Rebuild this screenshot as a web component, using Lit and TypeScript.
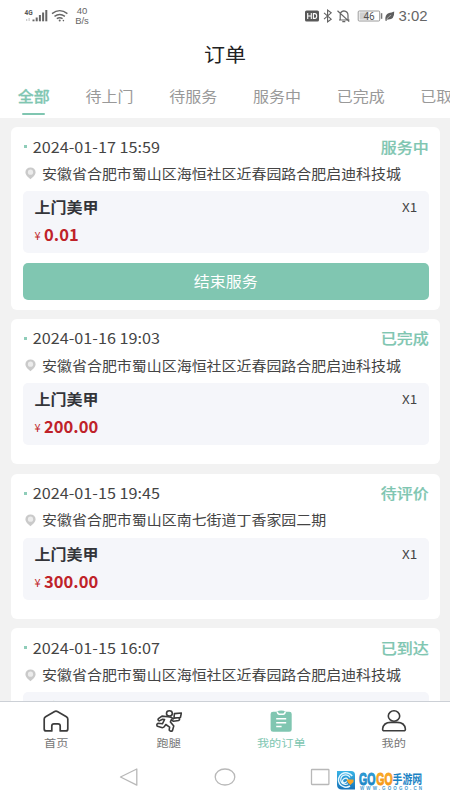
import { LitElement, html, css, svg, nothing } from "lit";
import { customElement, property, state } from "lit/decorators.js";
import { classMap } from "lit/directives/class-map.js";

interface Order {
  time: string;
  status: string;
  address: string;
  service: string;
  count: number;
  price: string;
  action?: string;
}

const LONG_ADDRESS = "安徽省合肥市蜀山区海恒社区近春园路合肥启迪科技城";

const ORDERS: Order[] = [
  { time: "2024-01-17 15:59", status: "服务中", address: LONG_ADDRESS, service: "上门美甲", count: 1, price: "0.01", action: "结束服务" },
  { time: "2024-01-16 19:03", status: "已完成", address: LONG_ADDRESS, service: "上门美甲", count: 1, price: "200.00" },
  { time: "2024-01-15 19:45", status: "待评价", address: "安徽省合肥市蜀山区南七街道丁香家园二期", service: "上门美甲", count: 1, price: "300.00" },
  { time: "2024-01-15 16:07", status: "已到达", address: LONG_ADDRESS, service: "上门美甲", count: 1, price: "300.00" },
];

const TABS = ["全部", "待上门", "待服务", "服务中", "已完成", "已取消"];

@customElement("status-bar")
class StatusBar extends LitElement {
  static styles = css`
    :host { display: flex; justify-content: space-between; align-items: flex-start; height: 35px; padding: 0 22px 0 24px; color: #666; font-family: Roboto, "Noto Sans", sans-serif; box-sizing: border-box; }
    .side { display: flex; align-items: center; height: 32px; }
    svg { display: block; }
    .rate { font: 9.5px/10px "Liberation Sans", sans-serif; text-align: center; margin-left: 5.5px; width: 17px; white-space: nowrap; }
    .clock { font: 14px/16px "Liberation Sans", sans-serif; width: 30px; white-space: nowrap; }
  `;
  render() {
    return html`
      <div class="side">
        <svg width="44" height="16" viewBox="0 0 44 16">
          <text x="0.5" y="6.5" font-size="6.5" font-weight="700" fill="#555">4G</text>
          <g fill="#ccc"><rect x="2" y="11" width="1.3" height="2"/><rect x="4.5" y="10" width="1.3" height="3"/></g>
          <g fill="#666"><rect x="8.5" y="11.5" width="2" height="1.8"/><rect x="11.7" y="9.5" width="2" height="3.8"/><rect x="14.9" y="7" width="2" height="6.3"/><rect x="18.1" y="4.5" width="2" height="8.8"/><rect x="21.3" y="2" width="2" height="11.3"/></g>
          <g fill="none" stroke="#666" stroke-width="1.4"><path d="M28 5.6Q35.7-.4 43.4 5.6"/><path d="M30.5 8.4q5.2-3.8 10.4 0"/><path d="M32.8 10.6q2.9-1.8 5.8 0"/></g>
          <circle cx="35.7" cy="12.4" r="1" fill="#666"/><circle cx="39.4" cy="12.6" r=".8" fill="#666"/>
        </svg>
        <div class="rate">40<br />B/s</div>
      </div>
      <div class="side">
        <svg width="93" height="16" viewBox="0 0 93 16">
          <rect x="0" y="2.5" width="14" height="11" rx="1.6" fill="#595959"/>
          <path d="M2.7 5v6M6.3 5v6M2.7 8h3.6M8.4 5.6v4.8h1.5q1.8 0 1.8-2.4t-1.8-2.4z" fill="none" stroke="#fff" stroke-width="1.1"/>
          <path d="M19 4.8l7.2 6.4-3.6 2.8V2l3.6 2.8L19 11.2" fill="none" stroke="#5f5f5f" stroke-width="1.1"/>
          <path d="M34 12h10.5M35.2 12V7.2q0-3.8 3.6-4.4 4.2.5 4.2 4.4V12M37.3 13.7h3M32.5 2.8l11.7 10.8" fill="none" stroke="#666" stroke-width="1.2"/>
          <rect x="53.2" y="3" width="21.5" height="10" rx="1" fill="#fff" stroke="#9a9a9a" stroke-width="1"/>
          <rect x="54.5" y="4.3" width="9" height="7.4" fill="#d0d0d0"/>
          <rect x="75.8" y="5.2" width="1.5" height="5.6" fill="#777"/>
          <text x="64" y="11.6" text-anchor="middle" font-size="10" fill="#555">46</text>
          <path d="M80.5 12.7q-1-6 3.5-7.7 2.6-.5 5.2-1.5 .4 8.7-6.9 8l-1 1.4z" fill="#5e5e5e"/>
          <path d="M81.5 11.5q2-3 4.6-4.3" fill="none" stroke="#ddd" stroke-width=".6"/>
        </svg>
        <div class="clock"><svg width="30" height="16" viewBox="0 0 30 16"><text x="0.5" y="13" font-size="14.5" textLength="29" lengthAdjust="spacingAndGlyphs" fill="#666">3:02</text></svg></div>
      </div>
    `;
  }
}

@customElement("order-card")
class OrderCard extends LitElement {
  @property({ attribute: false }) order!: Order;

  static styles = css`
    :host { display: block; height: 145.3px; box-sizing: border-box; padding: 9.5px 11.3px 0; border-radius: 6px; background: #fff; flex: none; }
    :host([tall]) { height: 182.5px; }
    .head { display: flex; align-items: center; height: 20px; }
    .dot { width: 3px; height: 3px; background: #8fcdb9; margin: 0 5.5px 0 1.7px; }
    .flat { display: block; transform: scaleY(0.91); white-space: nowrap; }
    .time { font-size: 16.2px; line-height: 20px; color: #444; flex: 1; }
    .status { font-size: 16px; line-height: 20px; font-weight: 500; color: #80c6b1; -webkit-text-stroke: 0.2px #80c6b1; }
    .place { display: flex; align-items: center; height: 24px; margin-top: 5.3px; }
    .pin { display: block; width: 11px; height: 13px; margin: 0 6px 0 2.5px; }
    .address { font-size: 14.96px; line-height: 24px; color: #444; }
    .item { height: 62.5px; margin-top: 5.2px; border-radius: 5px; background: #f5f6fa; padding: 4px 11.5px 0 12px; box-sizing: border-box; }
    .row { display: flex; justify-content: space-between; height: 24px; align-items: center; }
    .name { font-size: 16px; line-height: 24px; font-weight: 700; color: #333439; }
    .count { font-size: 13.5px; line-height: 24px; color: #444; }
    .price { display: flex; height: 24px; margin-top: 3px; color: #bf2229; align-items: center; }
    .yen { display: block; width: 7px; height: 7px; margin: 3px 2.5px 0 0; font-size: 11px; line-height: 7px; white-space: nowrap; }
    .amount { font-size: 16.5px; line-height: 24px; font-weight: 700; transform: scaleY(0.98); }
    .action { display: block; width: 100%; height: 37px; margin-top: 9.5px; padding: 0; border: 0; border-radius: 5px; background: #80c6b1; color: #fff; font: 16px/37px "Noto Sans CJK SC", sans-serif; }
  `;

  render() {
    const o = this.order;
    return html`
      <div class="head">
        <span class="dot"></span>
        <span class="flat time">${o.time}</span>
        <span class="flat status">${o.status}</span>
      </div>
      <div class="place">
        <svg class="pin" viewBox="0 0 11 13"><path d="M5.5.4A5 5 0 0 0 .4 5.3c0 3 3.1 5 5.1 7 2-2 5.1-4 5.1-7A5 5 0 0 0 5.5.4z" fill="#cacaca"/><circle cx="5.5" cy="5.2" r="2.6" fill="#ececec"/></svg>
        <span class="flat address">${o.address}</span>
      </div>
      <div class="item">
        <div class="row"><span class="flat name">${o.service}</span><span class="flat count">X${o.count}</span></div>
        <div class="price"><span class="yen">¥</span><span class="flat amount">${o.price}</span></div>
      </div>
      ${o.action ? html`<button class="action"><span class="flat">${o.action}</span></button>` : nothing}
    `;
  }
}

const NAV = [
  {
    label: "首页",
    icon: svg`<path d="M1.2 9.1q0-1.6 1.4-2.4l8.6-5q1.8-1 3.6 0l8.6 5q1.4.8 1.4 2.4v9.8q0 2-2 2h-5.6v-4.8q0-2.3-2.2-2.3h-4q-2.2 0-2.2 2.3v4.8H3.2q-2 0-2-2z" fill="none" stroke="#3c3c3c" stroke-width="1.7" stroke-linejoin="round"/>`,
  },
  {
    label: "跑腿",
    icon: svg`<g fill="none" stroke="#3c3c3c" stroke-width="1.6" stroke-linejoin="round" stroke-linecap="round"><ellipse cx="13.4" cy="3.4" rx="2.9" ry="2.6"/><path d="M18.4 3.6l7-.6-1 4.5-6.4.6z"/><path d="M12 6.8L6 6.1 2.4 8.6q-1 1.7.9 2.3l3.3-1.6 2 .2-2.2 4.3-4.2-.5q-2.2 1-.8 3l5 1.4q1.6 0 2.6-2l.8-1.2 3.8 2.6-.4 3q1.2 1.8 3.2.6l1.4-4.8-3.4-4 1-2.2 2 1.6 5.4-.8q1.2-1 .4-2M12 6.8l2.8.4 2.6 1.6"/></g>`,
  },
  {
    label: "我的订单",
    icon: svg`<path d="M5.1 1.7h4Q10.3.5 13.2.5t4.1 1.2h4q2.4 0 2.4 2.2v15.5q0 2.3-2.4 2.3H5.1q-2.5 0-2.5-2.3V3.9q0-2.2 2.5-2.2z" fill="#80c6b1"/><path d="M9.3 1.9q.4 2.4 2 2.4h3.9q1.6 0 2-2.4M8.2 8.8h10M8.2 12.7h10M8.2 16.6h5.4" fill="none" stroke="#fff" stroke-width="1.5"/>`,
  },
  {
    label: "我的",
    icon: svg`<g fill="none" stroke="#3c3c3c" stroke-width="1.6"><ellipse cx="13" cy="6" rx="5.7" ry="5.2"/><path d="M1.6 19q.8-6.6 8.3-6.6h6.2q7.5 0 8.3 6.6.1 1.8-1.8 1.8H3.4q-1.9 0-1.8-1.8z"/></g>`,
  },
];

@customElement("bottom-nav")
class BottomNav extends LitElement {
  @property({ type: Number }) active = 2;

  static styles = css`
    :host { display: flex; height: 53px; border-top: 1px solid #ccd0d6; background: #fff; box-sizing: border-box; flex: none; }
    .entry { flex: 1; display: flex; flex-direction: column; align-items: center; padding-top: 8px; color: #777; }
    .icon { display: block; width: 26px; height: 22px; }
    .label { display: block; font-size: 12.2px; line-height: 16px; margin-top: 2.5px; transform: scaleY(0.85); }
    .on { color: #80c6b1; }
  `;

  render() {
    return NAV.map(
      (n, i) => html`<div class=${classMap({ entry: true, on: i === this.active })}>
        <svg class="icon" viewBox="0 0 26 22">${n.icon}</svg><span class="label">${n.label}</span>
      </div>`,
    );
  }
}

@customElement("system-nav")
class SystemNav extends LitElement {
  static styles = css`
    :host { display: flex; height: 46px; background: #fff; flex: none; }
    .keys { display: block; width: 330px; height: 46px; }
    .brand { display: block; width: 120px; height: 46px; }
    .go { font: 700 17px "Liberation Sans", sans-serif; }
    .cn { font: 700 12.5px "Noto Sans CJK SC", sans-serif; }
    .url { font: 700 4.5px "Liberation Sans", sans-serif; }
  `;
  render() {
    return html`
      <svg class="keys" viewBox="0 0 330 46">
        <g fill="none" stroke="#b8b8b8" stroke-width="1.3" stroke-linejoin="round">
          <path d="M120.5 23L136.8 15v16.2z"/><ellipse cx="225" cy="23" rx="9.8" ry="8"/><rect x="311.5" y="15.5" width="17.4" height="15" rx=".5"/>
        </g>
      </svg>
      <svg class="brand" viewBox="0 0 120 46">
        <defs>
          <linearGradient id="blue" x2="0" y2="1"><stop stop-color="#39b4e6"/><stop offset="1" stop-color="#1673b9"/></linearGradient>
          <linearGradient id="gold" x2="0" y2="1"><stop stop-color="#ffc22e"/><stop offset="1" stop-color="#f28a14"/></linearGradient>
        </defs>
        <path d="M7 17h14q4 0 4 4v14.4H12q-5 0-5-5z" fill="url(#blue)"/>
        <path d="M22.2 22A7.5 7.2 0 1 0 20 32" fill="none" stroke="#e5f7ff" stroke-width="1.5"/>
        <path d="M20 23.5a4.9 4.7 0 1 0-2 6.2M18 26q-1.2-3-4-1.2t-.4 4q2 .3 3.2-1.5" fill="none" stroke="#e5f7ff" stroke-width="1.3"/>
        <path d="M16.5 25.5h7v2.4l-3.2 3-2.4-2.4z" fill="#f7a326"/>
        <g transform="translate(29 30.8) scale(.62 1)"><text class="go" x="0" y="0" fill="url(#blue)" stroke="#238dca" stroke-width="1">GO</text></g>
        <g transform="translate(46.2 30.8) scale(.62 1)"><text class="go" x="0" y="0" fill="url(#gold)" stroke="#f69b1d" stroke-width="1">GO</text></g>
        <g transform="translate(62.6 29.8) scale(.79 1)"><text class="cn" x="0" y="0" fill="#1c83c4">手游网</text></g>
        <text class="url" x="30" y="35.8" textLength="62" lengthAdjust="spacing" fill="#489bd0">WWW.GOOGO.CN</text>
      </svg>
    `;
  }
}

@customElement("app-root")
class AppRoot extends LitElement {
  @state() private tab = 0;

  static styles = css`
    :host { display: flex; flex-direction: column; width: 450px; height: 800px; overflow: hidden; background: #fff; font-family: "Noto Sans CJK SC", sans-serif; }
    .title { height: 40px; text-align: center; font-size: 21px; line-height: 38px; color: #222; flex: none; }
    .flat { display: block; transform: scaleY(0.9); }
    .tabs { display: flex; height: 43px; flex: none; overflow: hidden; }
    .tab { display: flex; flex-direction: column; align-items: center; flex: none; padding: 8.5px 17.85px 0; font-size: 16px; line-height: 24px; color: #999; }
    .on { color: #80c6b1; font-weight: 500; -webkit-text-stroke: 0.3px #80c6b1; }
    .bar { width: 23px; height: 2px; margin-top: 5.5px; border-radius: 1px; background: #80c6b1; }
    .list { flex: 1; min-height: 0; overflow: hidden; display: flex; flex-direction: column; gap: 9.4px; padding: 9px 10px 0 11.3px; background: #f2f2f2; }
  `;

  render() {
    return html`
      <status-bar></status-bar>
      <div class="title"><span class="flat">订单</span></div>
      <div class="tabs">
        ${TABS.map(
          (t, i) => html`<div class=${classMap({ tab: true, on: i === this.tab })} @click=${() => (this.tab = i)}>
            <span class="flat">${t}</span>${i === this.tab ? html`<i class="bar"></i>` : nothing}
          </div>`,
        )}
      </div>
      <div class="list">${ORDERS.map((o) => html`<order-card .order=${o} ?tall=${!!o.action}></order-card>`)}</div>
      <bottom-nav .active=${2}></bottom-nav>
      <system-nav></system-nav>
    `;
  }
}
